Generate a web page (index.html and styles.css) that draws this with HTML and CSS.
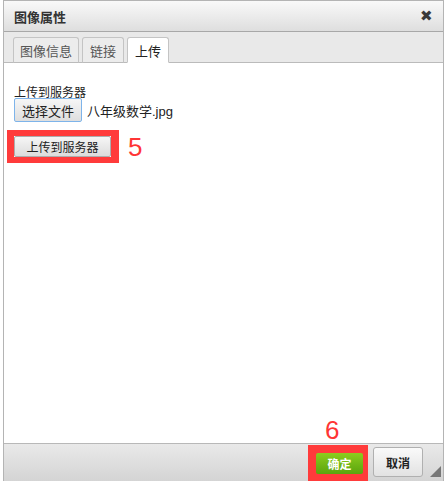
FILE: index.html
```html
<!DOCTYPE html>
<html lang="zh">
<head>
<meta charset="utf-8">
<title>图像属性</title>
<link rel="stylesheet" href="styles.css">
</head>
<body>
<div class="dialog">
  <div class="titlebar">
    <span class="title">图像属性</span>
    <span class="close">✖</span>
  </div>
  <div class="tabs">
    <div class="tab wide">图像信息</div>
    <div class="tab">链接</div>
    <div class="tab active">上传</div>
  </div>
  <div class="content">
    <div class="label">上传到服务器</div>
    <div class="filerow">
      <button class="filebtn">选择文件</button>
      <span class="filename">八年级数学.jpg</span>
    </div>
    <div class="uploadrow">
      <div class="redbox"><button class="btn">上传到服务器</button></div>
      <span class="num">5</span>
    </div>
    <span class="num num6">6</span>
  </div>
  <div class="footer">
    <div class="redbox2"><button class="ok">确定</button></div>
    <button class="cancel">取消</button>
    <span class="resize"></span>
  </div>
</div>
</body>
</html>
```

FILE: styles.css
```css
html, body {
  margin: 0;
  padding: 0;
  background: #fff;
}
body {
  font-family: "Liberation Sans", "Noto Sans CJK SC", sans-serif;
  font-size: 12px;
  color: #222;
}
.dialog {
  margin-left: 3px;
  width: 441px;
  height: 481px;
  box-sizing: border-box;
  border: 1px solid #b4b4b4;
  border-bottom: none;
  display: flex;
  flex-direction: column;
  position: relative;
}
.titlebar {
  height: 30px;
  flex: none;
  border-bottom: 1px solid #a8a8a8;
  background: linear-gradient(#f9f9f9, #dedede);
  display: flex;
  align-items: center;
  justify-content: space-between;
  padding: 0 10px;
}
.title {
  font-weight: bold;
  font-size: 13px;
  color: #333;
  font-family: "Noto Sans CJK SC", sans-serif;
}
.close {
  font-size: 15px;
  color: #3a3a3a;
  margin-right: 0;
}
.tabs {
  height: 30px;
  flex: none;
  background: #e9e9e9;
  border-bottom: 1px solid #bbb;
  display: flex;
  align-items: flex-end;
  gap: 3px;
  padding-left: 9px;
}
.tab {
  width: 42px;
  height: 26px;
  box-sizing: border-box;
  border: 1px solid #c4c4c4;
  border-bottom: 1px solid #bbb;
  border-radius: 3px 3px 0 0;
  background: #ececec;
  color: #555;
  font-size: 13px;
  display: flex;
  align-items: center;
  justify-content: center;
  margin-bottom: -1px;
  font-family: "Noto Sans CJK SC", sans-serif;
}
.tab.wide {
  width: 66px;
}
.tab.active {
  background: #fff;
  color: #222;
  border-bottom-color: #fff;
}
.content {
  flex: 1;
  padding: 23px 10px 0 10px;
  position: relative;
}
.label {
  font-size: 12px;
  line-height: 14px;
  color: #222;
}
.filerow {
  display: flex;
  align-items: center;
  margin-top: -2px;
}
.filebtn {
  height: 24px;
  width: 68px;
  border: 1px solid #7eb4ea;
  border-radius: 2px;
  background: linear-gradient(#f6f6f6, #dedede);
  font-family: "Noto Sans CJK SC", sans-serif;
  font-size: 13px;
  color: #222;
  padding: 0;
}
.filename {
  margin-left: 5px;
  font-size: 13px;
  color: #222;
}
.uploadrow {
  display: flex;
  align-items: center;
  margin-left: -7px;
  margin-top: 8px;
}
.redbox {
  border: 6px solid #ff3b3b;
  border-left-width: 7px;
  border-right-width: 8px;
  display: flex;
}
.btn {
  height: 21px;
  width: 97px;
  border: 1px solid #adadad;
  border-radius: 2px;
  background: linear-gradient(#f6f6f6, #dcdcdc);
  font-family: "Noto Sans CJK SC", sans-serif;
  font-size: 12px;
  color: #222;
  padding: 0;
}
.num {
  font-family: "Liberation Sans", sans-serif;
  font-size: 26px;
  color: #ff3535;
  margin-left: 9px;
  line-height: 26px;
}
.num6 {
  position: absolute;
  left: 321px;
  bottom: 0;
  margin: 0;
  line-height: 26px;
}
.footer {
  height: 37px;
  flex: none;
  border-top: 1px solid #b8b8b8;
  background: linear-gradient(#e9e9e9, #d4d4d4);
  display: flex;
  align-items: flex-start;
  padding-left: 304px;
  position: relative;
}
.redbox2 {
  background: #ff3b3b;
  width: 60px;
  height: 40px;
  box-sizing: border-box;
  padding: 8px 5px 0 8px;
  margin-top: 1px;
}
.ok {
  width: 47px;
  height: 21px;
  border: none;
  border-radius: 2px;
  background: linear-gradient(#8ccd1e, #5aa40e);
  color: #fff;
  font-weight: bold;
  font-family: "Noto Sans CJK SC", sans-serif;
  font-size: 12px;
  padding: 0;
  display: block;
}
.cancel {
  margin-left: 5px;
  margin-top: 3px;
  width: 50px;
  height: 30px;
  border: 1px solid #b0b0b0;
  border-radius: 3px;
  background: linear-gradient(#fafafa, #e2e2e2);
  font-weight: bold;
  font-family: "Noto Sans CJK SC", sans-serif;
  font-size: 12px;
  color: #222;
  padding: 0;
}
.resize {
  position: absolute;
  right: 2px;
  bottom: 4px;
  width: 0;
  height: 0;
  border-left: 11px solid transparent;
  border-bottom: 11px solid #777;
}
```
